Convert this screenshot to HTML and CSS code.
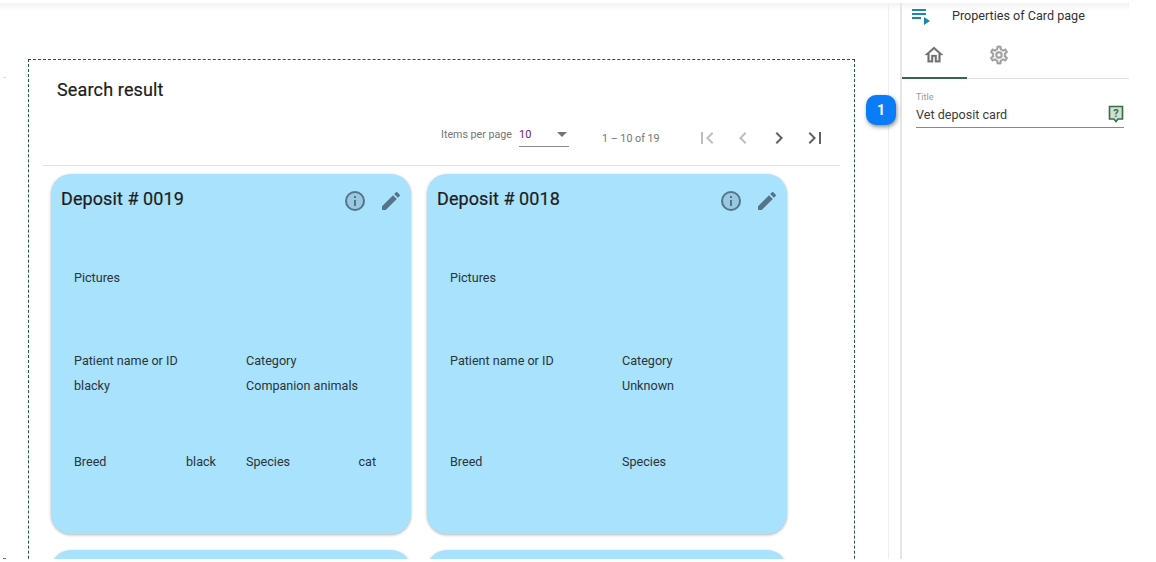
FILE: index.html
```html
<!DOCTYPE html>
<html lang="en">
<head>
<meta charset="utf-8">
<title>Properties of Card page</title>
<link rel="stylesheet" href="styles.css">
</head>
<body>
<div class="app">
  <span class="tick"></span>
  <span class="tick low"></span>
  <main class="canvas">
    <section class="result">
      <h1 class="result-title">Search result</h1>
      <div class="paginator">
        <span class="pg-label">Items per page</span>
        <div class="pg-select"><span class="pg-value">10</span><span class="pg-caret"></span></div>
        <span class="pg-range">1 – 10 of 19</span>
        <div class="pg-buttons">
          <svg class="pg-icon off" viewBox="0 0 24 24"><path d="M18.41 16.59 13.82 12l4.59-4.59L17 6l-6 6 6 6zM6 6h2v12H6z"/></svg>
          <svg class="pg-icon off" viewBox="0 0 24 24"><path d="M15.41 7.41 14 6l-6 6 6 6 1.41-1.41L10.83 12z"/></svg>
          <svg class="pg-icon" viewBox="0 0 24 24"><path d="M10 6 8.59 7.41 13.17 12l-4.58 4.59L10 18l6-6z"/></svg>
          <svg class="pg-icon" viewBox="0 0 24 24"><path d="M5.59 7.41 10.18 12l-4.59 4.59L7 18l6-6-6-6zM16 6h2v12h-2z"/></svg>
        </div>
      </div>
      <div class="cards">
        <article class="card">
          <header class="card-head">
            <h2 class="card-title">Deposit # 0019</h2>
            <svg class="card-icon" viewBox="0 0 24 24"><circle class="info-disc" cx="12" cy="12" r="9"/><path d="M11 7h2v2h-2zm0 4h2v6h-2zm1-9a10 10 0 1 0 0 20 10 10 0 0 0 0-20zm0 18a8 8 0 1 1 0-16 8 8 0 0 1 0 16z"/></svg>
            <svg class="card-icon" viewBox="0 0 24 24"><path d="M3 17.25V21h3.75L17.81 9.94l-3.75-3.75zM20.71 7.04a1 1 0 0 0 0-1.41l-2.34-2.34a1 1 0 0 0-1.41 0l-1.83 1.83 3.75 3.75z"/></svg>
          </header>
          <div class="pictures">Pictures</div>
          <div class="fields">
            <div class="stack"><span>Patient name or ID</span><span>blacky</span></div>
            <div class="stack"><span>Category</span><span>Companion animals</span></div>
            <div class="pair"><span>Breed</span><span>black</span></div>
            <div class="pair"><span>Species</span><span>cat</span></div>
          </div>
        </article>
        <article class="card">
          <header class="card-head">
            <h2 class="card-title">Deposit # 0018</h2>
            <svg class="card-icon" viewBox="0 0 24 24"><circle class="info-disc" cx="12" cy="12" r="9"/><path d="M11 7h2v2h-2zm0 4h2v6h-2zm1-9a10 10 0 1 0 0 20 10 10 0 0 0 0-20zm0 18a8 8 0 1 1 0-16 8 8 0 0 1 0 16z"/></svg>
            <svg class="card-icon" viewBox="0 0 24 24"><path d="M3 17.25V21h3.75L17.81 9.94l-3.75-3.75zM20.71 7.04a1 1 0 0 0 0-1.41l-2.34-2.34a1 1 0 0 0-1.41 0l-1.83 1.83 3.75 3.75z"/></svg>
          </header>
          <div class="pictures">Pictures</div>
          <div class="fields">
            <div class="stack"><span>Patient name or ID</span><span></span></div>
            <div class="stack"><span>Category</span><span>Unknown</span></div>
            <div class="pair"><span>Breed</span><span></span></div>
            <div class="pair"><span>Species</span><span></span></div>
          </div>
        </article>
        <article class="card"></article>
        <article class="card"></article>
      </div>
    </section>
  </main>
  <aside class="panel">
    <div class="badge">1</div>
    <header class="panel-head">
      <svg class="panel-icon" viewBox="0 0 20 20"><path d="M1 2h14v2H1zM1 6h14v2H1zM1 10h9v2H1z" fill="#1d87a8"/><path d="M13 10l6 4-6 4z" fill="#1d87a8"/></svg>
      <span class="panel-title">Properties of Card page</span>
    </header>
    <nav class="tabs">
      <div class="tab active">
        <svg class="tab-icon" viewBox="0 0 24 24"><path d="M12 5.69l5 4.5V18h-2v-6H9v6H7v-7.81zM12 3 2 12h3v8h6v-6h2v6h6v-8h3z"/></svg>
      </div>
      <div class="tab">
        <svg class="tab-icon gear" viewBox="0 0 24 24"><path d="M19.43 12.98c.04-.32.07-.64.07-.98s-.03-.66-.07-.98l2.11-1.65a.5.5 0 0 0 .12-.64l-2-3.46a.5.5 0 0 0-.61-.22l-2.49 1a7.3 7.3 0 0 0-1.69-.98l-.38-2.65A.49.49 0 0 0 14 2h-4a.49.49 0 0 0-.49.42l-.38 2.65c-.61.25-1.17.59-1.69.98l-2.49-1a.5.5 0 0 0-.61.22l-2 3.46a.49.49 0 0 0 .12.64l2.11 1.65c-.04.32-.07.65-.07.98s.03.66.07.98l-2.11 1.65a.5.5 0 0 0-.12.64l2 3.46c.12.22.39.3.61.22l2.49-1c.52.4 1.08.73 1.69.98l.38 2.65c.03.24.24.42.49.42h4c.25 0 .46-.18.49-.42l.38-2.65c.61-.25 1.17-.59 1.69-.98l2.49 1c.23.09.49 0 .61-.22l2-3.46a.5.5 0 0 0-.12-.64zm-1.98-1.71c.04.31.05.52.05.73s-.02.43-.05.73l-.14 1.13.89.7 1.08.84-.7 1.21-1.27-.51-1.04-.42-.9.68c-.43.32-.84.56-1.25.73l-1.06.43-.16 1.13-.2 1.35h-1.4l-.19-1.35-.16-1.13-1.06-.43a5.7 5.7 0 0 1-1.23-.71l-.91-.7-1.06.43-1.27.51-.7-1.21 1.08-.84.89-.7-.14-1.13c-.03-.31-.05-.54-.05-.74s.02-.43.05-.73l.14-1.13-.89-.7-1.08-.84.7-1.21 1.27.51 1.04.42.9-.68c.43-.32.84-.56 1.25-.73l1.06-.43.16-1.13.2-1.35h1.39l.19 1.35.16 1.13 1.06.43c.43.18.83.41 1.23.71l.91.7 1.06-.43 1.27-.51.7 1.21-1.07.85-.89.7zM12 8a4 4 0 1 0 0 8 4 4 0 0 0 0-8zm0 6a2 2 0 1 1 0-4 2 2 0 0 1 0 4z"/></svg>
      </div>
    </nav>
    <div class="form-field">
      <label class="field-label">Title</label>
      <div class="field-row">
        <span class="field-value">Vet deposit card</span>
        <svg class="help" viewBox="0 0 16 18"><path d="M1.5 1.5h13v12.5H10l-2 2.5L6 14H1.5z" fill="#cfe0cf" stroke="#3a6b4a" stroke-width="1.6"/><text x="8" y="12" text-anchor="middle" class="help-mark">?</text></svg>
      </div>
    </div>
  </aside>
</div>
</body>
</html>
```
FILE: styles.css
```css
html, body {
  margin: 0;
  height: 100%;
  background: #fff;
  font-family: Roboto, "Liberation Sans", sans-serif;
  overflow: hidden;
}
.app {
  position: relative;
  display: flex;
  width: 1129px;
  height: 559px;
  overflow: hidden;
  box-shadow: inset 0 7px 5px -3px #f3f3f3;
  border-top: 3px solid #fff;
  box-sizing: border-box;
}
.tick {
  position: absolute;
  left: 3px;
  top: 74px;
  width: 3px;
  height: 1px;
  background: #ddd;
}
.tick.low { top: 555px; background: #4a9a4a; }
.canvas {
  width: 889px;
  height: 100%;
  padding: 56px 33px 0 28px;
  box-sizing: border-box;
  border-right: 1px solid #eee;
  flex: none;
  margin-right: 11px;
}
.result {
  height: 600px;
  box-sizing: border-box;
  border: 1px dashed #1f5a38;
  padding: 0 14px;
}
.result-title {
  margin: 0;
  padding: 19px 0 0 14px;
  font-size: 18px;
  line-height: 21px;
  font-weight: 400;
  letter-spacing: .15px;
  color: #1c1c1c;
  -webkit-text-stroke: .2px #1c1c1c;
}
.paginator {
  display: flex;
  align-items: center;
  height: 54px;
  padding: 11px 0 0 398px;
  border-bottom: 1px solid #e0e0e0;
  color: #757575;
  font-size: 10.7px;
}
.pg-label { position: relative; top: -4px; }
.pg-select {
  width: 50px;
  height: 24px;
  margin: -7px 0 0 7px;
  display: flex;
  align-items: center;
  justify-content: space-between;
  box-sizing: border-box;
  border-bottom: 1px solid #8a8a8a;
}
.pg-value { color: #6a1b7a; font-size: 11px; }
.pg-caret {
  width: 0;
  height: 0;
  margin-right: 2px;
  border-left: 5px solid transparent;
  border-right: 5px solid transparent;
  border-top: 5px solid #757575;
}
.pg-range { margin-left: 33px; }
.pg-buttons { display: flex; margin-left: 35px; gap: 12px; }
.pg-icon { width: 24px; height: 24px; fill: #616161; }
.pg-icon.off { fill: #bdbdbd; }
.cards {
  display: grid;
  grid-template-columns: 360px 360px;
  grid-auto-rows: 360px;
  gap: 16px;
  padding: 8px 0 0 8px;
}
.card {
  background: #a9e2fd;
  border-radius: 20px;
  box-shadow: 0 1px 3px rgba(0,0,0,.3);
  box-sizing: border-box;
  padding: 0 10px;
}
.card-head {
  display: flex;
  align-items: center;
  height: 50px;
  gap: 12px;
  margin-right: -2px;
}
.card-title {
  margin: 0 auto 1px 0;
  font-size: 18px;
  font-weight: 400;
  letter-spacing: .08px;
  color: #1c1c1c;
  -webkit-text-stroke: .2px #1c1c1c;
}
.card-icon { width: 24px; height: 24px; fill: #557488; margin-top: 3px; }
.info-disc { fill: #557488; fill-opacity: .22; }
.pictures, .fields { font-size: 12.6px; color: #2b3438; line-height: 15px; }
.pictures { padding: 46px 0 0 13px; height: 15px; }
.fields {
  display: grid;
  grid-template-columns: 142px 130px;
  column-gap: 30px;
  grid-template-rows: 101px 15px;
  padding: 68px 0 0 13px;
}
.stack { display: flex; flex-direction: column; gap: 10px; }
.stack span { min-height: 15px; }
.pair { display: flex; justify-content: space-between; }
.panel {
  position: relative;
  flex: 1;
  border-left: 2px solid #e6e6e6;
  box-sizing: border-box;
  min-width: 0;
  height: 100%;
}
.badge {
  position: absolute;
  left: -36px;
  top: 92px;
  width: 30px;
  height: 30px;
  border-radius: 10px;
  background: #0a7cf8;
  color: #fff;
  font-size: 14px;
  font-weight: 700;
  display: flex;
  align-items: center;
  justify-content: center;
  box-shadow: 1px 2px 4px rgba(0,0,0,.45);
}
.panel-head {
  display: flex;
  align-items: center;
  height: 22px;
  padding: 4px 0 0 9px;
  margin-bottom: -2px;
}
.panel-icon { width: 20px; height: 20px; flex: none; position: relative; top: -1px; }
.panel-title {
  margin-left: 21px;
  font-size: 12.6px;
  color: #333;
  position: relative;
  top: -3px;
}
.tabs {
  display: flex;
  height: 51px;
  border-bottom: 1px solid #e0e0e0;
}
.tab {
  width: 65px;
  display: flex;
  align-items: center;
  justify-content: center;
  box-sizing: border-box;
  padding: 5px 2px 0 0;
}
.tab.active { border-bottom: 2px solid #35684a; margin-bottom: -1px; }
.tab-icon { width: 22px; height: 22px; fill: #707070; stroke: #707070; stroke-width: .3; }
.gear { fill: #a0a0a0; stroke: #a0a0a0; }
.form-field { padding: 13px 5px 0 14px; }
.field-label { display: block; font-size: 9px; line-height: 11px; color: #999; }
.field-row {
  display: flex;
  align-items: center;
  justify-content: space-between;
  height: 25px;
  padding-bottom: 2px;
  box-sizing: border-box;
  border-bottom: 1px solid #8a8a8a;
}
.field-value { font-size: 12.6px; color: #3c3c3c; }
.help { width: 16px; height: 18px; }
.help-mark { font-size: 11px; font-weight: 700; fill: #3a6b4a; font-family: Roboto, sans-serif; }
```
